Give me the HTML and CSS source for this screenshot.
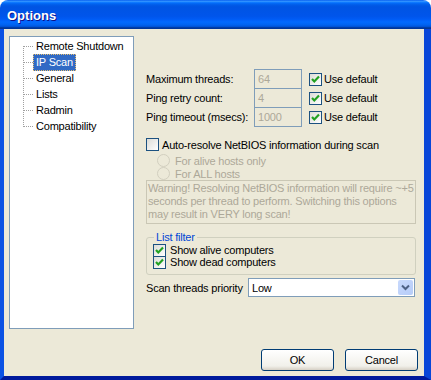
FILE: index.html
```html
<!DOCTYPE html>
<html lang="en">
<head>
    <meta charset="UTF-8">
    <title>Options</title>
    <link rel="stylesheet" href="styles.css">
</head>
<body>
    <div class="window">
        <div class="titlebar">Options</div>

        <div class="frame">
            <div class="content">
                <!-- arbol de paginas -->
                <ul class="tree">
                    <li><span class="node">Remote Shutdown</span></li>
                    <li><span class="node selected">IP Scan</span></li>
                    <li><span class="node">General</span></li>
                    <li><span class="node">Lists</span></li>
                    <li><span class="node">Radmin</span></li>
                    <li><span class="node">Compatibility</span></li>
                </ul>

                <div class="panel">
                    <div class="field-row">
                        <span class="field-label">Maximum threads:</span>
                        <span class="textbox">64</span>
                        <span class="check on"><svg width="11" height="11" viewBox="0 0 11 11"><path d="M2 5 L4.3 7.4 L9 2.6" /></svg></span>
                        <span class="check-text">Use default</span>
                    </div>
                    <div class="field-row">
                        <span class="field-label">Ping retry count:</span>
                        <span class="textbox">4</span>
                        <span class="check on"><svg width="11" height="11" viewBox="0 0 11 11"><path d="M2 5 L4.3 7.4 L9 2.6" /></svg></span>
                        <span class="check-text">Use default</span>
                    </div>
                    <div class="field-row">
                        <span class="field-label">Ping timeout (msecs):</span>
                        <span class="textbox">1000</span>
                        <span class="check on"><svg width="11" height="11" viewBox="0 0 11 11"><path d="M2 5 L4.3 7.4 L9 2.6" /></svg></span>
                        <span class="check-text">Use default</span>
                    </div>

                    <div class="option-row auto-row">
                        <span class="check"></span>
                        <span class="auto-text">Auto-resolve NetBIOS information during scan</span>
                    </div>
                    <div class="radio-row first">
                        <span class="radio"></span>
                        <span>For alive hosts only</span>
                    </div>
                    <div class="radio-row">
                        <span class="radio"></span>
                        <span>For ALL hosts</span>
                    </div>

                    <div class="warning">
                        Warning! Resolving NetBIOS information will require ~+5<br>
                        seconds per thread to perform. Switching this options<br>
                        may result in VERY long scan!
                    </div>

                    <fieldset class="group">
                        <legend>List filter</legend>
                        <div class="group-row">
                            <span class="check on"><svg width="11" height="11" viewBox="0 0 11 11"><path d="M2 5 L4.3 7.4 L9 2.6" /></svg></span>
                            <span class="group-text">Show alive computers</span>
                        </div>
                        <div class="group-row">
                            <span class="check on"><svg width="11" height="11" viewBox="0 0 11 11"><path d="M2 5 L4.3 7.4 L9 2.6" /></svg></span>
                            <span class="group-text">Show dead computers</span>
                        </div>
                    </fieldset>

                    <div class="priority-row">
                        <span class="priority-label">Scan threads priority</span>
                        <div class="combo">
                            <span class="combo-value">Low</span>
                            <span class="combo-button"><svg width="15" height="15" viewBox="0 0 15 15"><path d="M4 5.5 L7.5 9 L11 5.5" /></svg></span>
                        </div>
                    </div>
                </div>
            </div>

            <div class="buttons">
                <button class="xp-button">OK</button>
                <button class="xp-button">Cancel</button>
            </div>
        </div>
    </div>
</body>
</html>
```

FILE: styles.css
```css
html, body {
    margin: 0;
    padding: 0;
}

body {
    font-family: "Liberation Sans", Arial, sans-serif;
    font-size: 11px;
    letter-spacing: -0.2px;
    color: #000;
    background: #fff;
}

.window {
    width: 431px;
    height: 380px;
    display: flex;
    flex-direction: column;
}

/* barra de titulo azul estilo XP */
.titlebar {
    height: 29px;
    box-sizing: border-box;
    padding: 2px 0 0 7px;
    line-height: 27px;
    border-radius: 8px 8px 0 0;
    color: #fff;
    font-weight: bold;
    font-size: 13px;
    letter-spacing: 0;
    text-shadow: 1px 1px #0F1089;
    background: linear-gradient(#0058EE 0%, #3593FF 4%, #288EFF 6%, #127DFF 8%, #036FFC 10%, #0262EE 14%, #0057E5 20%, #0054E3 24%, #0055EB 56%, #005BF5 66%, #026AFE 76%, #0062EF 86%, #0052D6 92%, #0040AB 94%, #003092 100%);
}

.frame {
    flex: 1;
    display: flex;
    flex-direction: column;
    background: #ECE9D8;
    border-left: 4px solid #0B52E4;
    border-right: 7px solid #0846D8;
    border-bottom: 4px solid #001A9C;
}

.content {
    display: flex;
    padding: 7px 8px 0 5px;
}

/* arbol */
.tree {
    list-style: none;
    margin: 0;
    padding: 1px 0 0 0;
    width: 125px;
    height: 293px;
    box-sizing: border-box;
    border: 1px solid #7F9DB9;
    background: #fff;
    position: relative;
}

.tree::before {
    content: "";
    position: absolute;
    left: 13px;
    top: 9px;
    height: 81px;
    border-left: 1px dotted #A0A0A0;
}

.tree li {
    height: 16px;
    display: flex;
    align-items: center;
    padding-left: 23px;
    position: relative;
}

.tree li::before {
    content: "";
    position: absolute;
    left: 14px;
    top: 8px;
    width: 9px;
    border-top: 1px dotted #A0A0A0;
}

.node {
    padding: 1px 2px;
    border: 1px solid transparent;
    line-height: 13px;
}

.node.selected {
    background: #316AC5;
    color: #fff;
    border: 1px dotted #E8C070;
}

/* panel derecho */
.panel {
    width: 270px;
    margin-left: 12px;
    padding-top: 33px;
}

.field-row {
    display: flex;
    align-items: center;
    height: 20px;
}

.field-row + .field-row {
    margin-top: -1px;
}

.field-label {
    width: 108px;
}

.textbox {
    width: 48px;
    height: 20px;
    box-sizing: border-box;
    border: 1px solid #7F9DB9;
    background: #ECE9D8;
    color: #ACA899;
    padding: 0 3px;
    line-height: 18px;
}

.check {
    width: 13px;
    height: 13px;
    box-sizing: border-box;
    border: 1px solid #1C5180;
    background: linear-gradient(135deg, #DCDCD7, #FFFFFF);
    display: inline-flex;
    align-items: center;
    justify-content: center;
    flex-shrink: 0;
}

.check svg path {
    fill: none;
    stroke: #21A121;
    stroke-width: 2.2;
}

.field-row .check {
    margin-left: 7px;
}

.check-text {
    margin-left: 2px;
}

.option-row {
    display: flex;
    align-items: center;
    height: 13px;
}

.auto-row {
    margin-top: 11px;
}

.auto-text {
    margin-left: 3px;
}

.radio-row {
    display: flex;
    align-items: center;
    height: 13px;
    padding-left: 11px;
    color: #ACA899;
}

.radio-row.first {
    margin-top: 3px;
}

.radio {
    width: 13px;
    height: 13px;
    box-sizing: border-box;
    border: 1px solid #D2CFBF;
    border-radius: 50%;
    margin-right: 5px;
}

.warning {
    height: 44px;
    box-sizing: border-box;
    border: 1px solid #CAC7B5;
    color: #ACA899;
    padding: 1px 1px 0 1px;
    line-height: 13px;
    white-space: nowrap;
    overflow: hidden;
}

/* grupo list filter */
.group {
    margin: 7px 0 0 0;
    padding: 0 6px 6px 6px;
    border: 1px solid #D0D0BF;
    border-radius: 3px;
}

.group legend {
    color: #0046D5;
    padding: 0 2px;
    margin-left: 1px;
    line-height: 13px;
}

.group-row {
    display: flex;
    align-items: center;
    height: 12px;
}

.group-text {
    margin-left: 4px;
}

.priority-row {
    display: flex;
    align-items: center;
    margin-top: 3px;
    height: 19px;
}

.priority-label {
    width: 102px;
}

.combo {
    width: 167px;
    height: 19px;
    box-sizing: border-box;
    border: 1px solid #7F9DB9;
    background: #fff;
    display: flex;
    align-items: center;
    justify-content: space-between;
}

.combo-value {
    padding-left: 3px;
}

.combo-button {
    width: 15px;
    height: 15px;
    margin-right: 1px;
    border-radius: 2px;
    background: linear-gradient(135deg, #C8D9FC, #B6CCF8);
    display: flex;
}

.combo-button path {
    fill: none;
    stroke: #4D6185;
    stroke-width: 2;
}

/* botones */
.buttons {
    display: flex;
    justify-content: flex-end;
    gap: 11px;
    margin-top: 20px;
    padding-right: 6px;
}

.xp-button {
    width: 73px;
    height: 22px;
    border: 1px solid #003C74;
    border-radius: 3px;
    background: linear-gradient(#FFFFFF, #F1F0EA 80%, #D6D0C5);
    font-family: "Liberation Sans", Arial, sans-serif;
    font-size: 11px;
    letter-spacing: -0.2px;
    color: #000;
    padding: 0;
}
```
